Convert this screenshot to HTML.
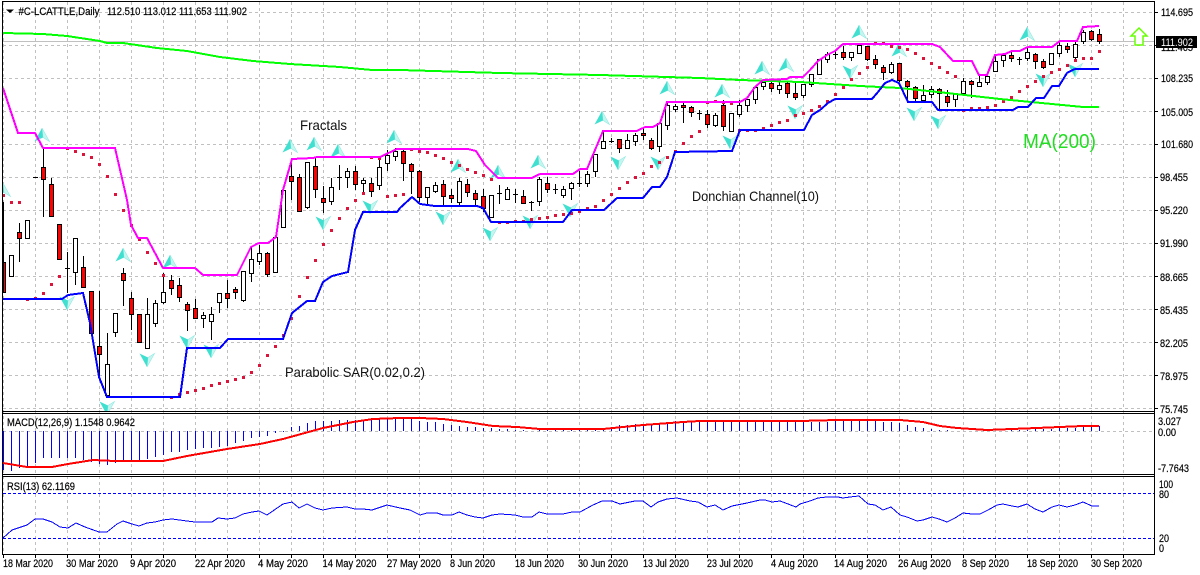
<!DOCTYPE html>
<html><head><meta charset="utf-8"><title>#C-LCATTLE,Daily</title>
<style>html,body{margin:0;padding:0;background:#fff}svg{display:block}text{font-family:"Liberation Sans",Arial,sans-serif;fill:#000}.s text{stroke:#000;stroke-width:.2}</style></head>
<body>
<svg xmlns="http://www.w3.org/2000/svg" width="1200" height="575" viewBox="0 0 1200 575">
<defs>
<g id="u"><path d="M0-7L7.5 6.5L1 2.5Z" fill="#c6f5f0" stroke="#8eeae0" stroke-width=".6"/><path d="M0-7L-7.5 6.5L1 2.5Z" fill="#40e0d0"/></g>
<g id="d"><path d="M0 7L7.5-6.5L1-2.5Z" fill="#c6f5f0" stroke="#8eeae0" stroke-width=".6"/><path d="M0 7L-7.5-6.5L1-2.5Z" fill="#40e0d0"/></g>
<clipPath id="c"><rect x="3" y="2" width="1151" height="409"/></clipPath>
</defs>
<!-- grid -->
<g shape-rendering="crispEdges" fill="none" stroke="#c0c0c0" stroke-dasharray="3 3">
<path d="M3.5 2V554M35.5 2V554M67.5 2V554M99.5 2V554M131.5 2V554M163.5 2V554M195.5 2V554M227.5 2V554M259.5 2V554M291.5 2V554M323.5 2V554M355.5 2V554M387.5 2V554M419.5 2V554M451.5 2V554M483.5 2V554M515.5 2V554M547.5 2V554M579.5 2V554M611.5 2V554M643.5 2V554M675.5 2V554M707.5 2V554M739.5 2V554M771.5 2V554M803.5 2V554M835.5 2V554M867.5 2V554M899.5 2V554M931.5 2V554M963.5 2V554M995.5 2V554M1027.5 2V554M1059.5 2V554M1091.5 2V554M1123.5 2V554"/>
<path d="M3 12.5H1154M3 45.5H1154M3 78.5H1154M3 111.5H1154M3 144.5H1154M3 177.5H1154M3 210.5H1154M3 243.5H1154M3 276.5H1154M3 309.5H1154M3 342.5H1154M3 375.5H1154M3 408.5H1154M3 431.5H1154"/>
</g>
<path d="M3 41.5H1155" stroke="#c0c0c0" fill="none" shape-rendering="crispEdges"/>
<!-- fractals -->
<g clip-path="url(#c)">
<use href="#u" x="3" y="190"/><use href="#u" x="42" y="135"/><use href="#u" x="290" y="146"/><use href="#u" x="314" y="144"/><use href="#u" x="338" y="151"/><use href="#u" x="394" y="137"/><use href="#u" x="123" y="255"/><use href="#u" x="170" y="262"/><use href="#u" x="458" y="166"/><use href="#u" x="498" y="172"/><use href="#u" x="538" y="162"/><use href="#u" x="602" y="118"/><use href="#u" x="667" y="88"/><use href="#u" x="722" y="91"/><use href="#u" x="762" y="68"/><use href="#u" x="786" y="65"/><use href="#u" x="859" y="32"/><use href="#u" x="899" y="50"/><use href="#u" x="1027" y="34"/>
<use href="#d" x="67" y="303"/><use href="#d" x="107" y="408"/><use href="#d" x="147" y="360"/><use href="#d" x="187" y="342"/><use href="#d" x="211" y="351"/><use href="#d" x="323" y="223"/><use href="#d" x="370" y="207"/><use href="#d" x="443" y="218"/><use href="#d" x="490" y="234"/><use href="#d" x="530" y="222"/><use href="#d" x="570" y="210"/><use href="#d" x="618" y="163"/><use href="#d" x="658" y="163"/><use href="#d" x="730" y="142"/><use href="#d" x="795" y="112"/><use href="#d" x="850" y="72"/><use href="#d" x="914" y="114"/><use href="#d" x="938" y="122"/><use href="#d" x="1043" y="80"/><use href="#d" x="1075" y="70"/>
</g>
<!-- candles -->
<g shape-rendering="crispEdges" stroke="#000" stroke-width="1">
<path fill="none" d="M3.5 202V292M11.5 255V277M19.5 223V262M43.5 148V217M51.5 178V216M67.5 252V293M75.5 238V285M83.5 256V287M99.5 291V377M107.5 333V395M115.5 313V337M123.5 268V306M131.5 292V330M147.5 298V349M155.5 300V327M163.5 273V304M171.5 275V295M179.5 278V302M187.5 302V331M195.5 299V319M203.5 312V328M211.5 307V340M219.5 293V313M227.5 280V308M235.5 287V299M243.5 271V302M251.5 246V282M259.5 245V265M267.5 252V277M291.5 158V200M299.5 174V212M307.5 162V209M315.5 158V198M323.5 186V213M331.5 178V205M339.5 165V190M347.5 168V188M355.5 166V190M363.5 178V193M371.5 178V197M379.5 157V190M387.5 150V171M395.5 148V161M403.5 149V181M411.5 163V194M419.5 170V202M427.5 187V204M435.5 182V193M443.5 180V205M451.5 189V203M459.5 178V205M467.5 179V197M475.5 190V206M483.5 189V212M491.5 195V217M499.5 185V204M507.5 187V200M515.5 189V203M523.5 190V204M531.5 201V211M539.5 177V206M547.5 177V193M555.5 184V194M563.5 186V198M571.5 182V200M579.5 171V187M587.5 171V187M595.5 154V177M603.5 132V148M611.5 138V143M619.5 139V153M627.5 134V149M635.5 133V146M643.5 128V140M651.5 138V150M659.5 123V152M667.5 103V130M675.5 104V112M683.5 103V123M691.5 106V117M699.5 110V120M707.5 110V128M715.5 113V127M723.5 100V131M731.5 113V131M739.5 100V117M747.5 99V112M755.5 87V104M763.5 80V90M771.5 82V92M779.5 82V94M787.5 82V98M795.5 83V100M803.5 84V98M811.5 74V87M819.5 59V74M827.5 52V63M835.5 51V59M843.5 46V60M851.5 52V61M859.5 45V54M867.5 46V61M875.5 55V69M883.5 65V80M891.5 62V74M899.5 63V82M907.5 80V100M915.5 86V102M923.5 85V102M931.5 86V98M939.5 88V109M947.5 90V107M955.5 93V107M963.5 78V95M971.5 80V98M979.5 75V87M987.5 75V85M995.5 55V72M1003.5 55V67M1011.5 52V62M1019.5 57V65M1027.5 47V61M1035.5 53V69M1043.5 59V69M1051.5 53V65M1059.5 42V57M1067.5 43V53M1075.5 42V62M1083.5 30V44M1091.5 30V41M1099.5 29V44"/>
<path fill="none" d="M33 177.5h5M65 268.5h5M337 177.5h5M497 193.5h5M513 194.5h5M529 202.5h5M553 189.5h5M577 183.5h5M609 141.5h5M697 113.5h5M833 54.5h5M1017 59.5h5"/>
<path fill="#fff" d="M9.5 255.5h4V276.5h-4zM25.5 220.5h4V238.5h-4zM73.5 238.5h4V272.5h-4zM105.5 364.5h4V395.5h-4zM113.5 313.5h4V332.5h-4zM145.5 314.5h4V348.5h-4zM153.5 303.5h4V323.5h-4zM161.5 292.5h4V302.5h-4zM201.5 315.5h4V318.5h-4zM209.5 314.5h4V321.5h-4zM217.5 293.5h4V302.5h-4zM241.5 271.5h4V300.5h-4zM249.5 259.5h4V273.5h-4zM257.5 253.5h4V261.5h-4zM273.5 237.5h4V272.5h-4zM281.5 190.5h4V227.5h-4zM305.5 162.5h4V207.5h-4zM329.5 187.5h4V201.5h-4zM345.5 171.5h4V177.5h-4zM361.5 180.5h4V183.5h-4zM377.5 167.5h4V185.5h-4zM385.5 155.5h4V163.5h-4zM393.5 151.5h4V156.5h-4zM425.5 187.5h4V197.5h-4zM433.5 185.5h4V191.5h-4zM457.5 181.5h4V202.5h-4zM489.5 195.5h4V217.5h-4zM505.5 189.5h4V199.5h-4zM537.5 179.5h4V201.5h-4zM561.5 189.5h4V195.5h-4zM569.5 183.5h4V188.5h-4zM585.5 174.5h4V183.5h-4zM593.5 154.5h4V171.5h-4zM601.5 141.5h4V148.5h-4zM625.5 140.5h4V148.5h-4zM633.5 135.5h4V141.5h-4zM657.5 123.5h4V146.5h-4zM665.5 105.5h4V125.5h-4zM673.5 106.5h4V109.5h-4zM713.5 115.5h4V125.5h-4zM729.5 113.5h4V131.5h-4zM737.5 105.5h4V114.5h-4zM745.5 99.5h4V105.5h-4zM753.5 87.5h4V99.5h-4zM761.5 82.5h4V86.5h-4zM777.5 85.5h4V89.5h-4zM801.5 84.5h4V95.5h-4zM809.5 74.5h4V84.5h-4zM817.5 59.5h4V74.5h-4zM825.5 54.5h4V59.5h-4zM849.5 52.5h4V57.5h-4zM857.5 45.5h4V53.5h-4zM889.5 64.5h4V72.5h-4zM921.5 95.5h4V100.5h-4zM929.5 89.5h4V94.5h-4zM953.5 94.5h4V99.5h-4zM961.5 81.5h4V93.5h-4zM977.5 82.5h4V86.5h-4zM985.5 76.5h4V82.5h-4zM993.5 61.5h4V71.5h-4zM1001.5 55.5h4V60.5h-4zM1025.5 52.5h4V58.5h-4zM1049.5 53.5h4V64.5h-4zM1057.5 45.5h4V53.5h-4zM1073.5 44.5h4V57.5h-4zM1081.5 32.5h4V41.5h-4z"/>
<path fill="#f00" d="M3.5 262.5h2V292.5h-2zM17.5 232.5h4V238.5h-4zM41.5 167.5h4V179.5h-4zM49.5 184.5h4V216.5h-4zM57.5 224.5h4V259.5h-4zM81.5 267.5h4V287.5h-4zM89.5 291.5h4V333.5h-4zM97.5 346.5h4V354.5h-4zM121.5 273.5h4V280.5h-4zM129.5 298.5h4V314.5h-4zM137.5 314.5h4V342.5h-4zM169.5 280.5h4V288.5h-4zM177.5 285.5h4V297.5h-4zM185.5 304.5h4V310.5h-4zM193.5 308.5h4V318.5h-4zM225.5 293.5h4V298.5h-4zM233.5 289.5h4V292.5h-4zM265.5 253.5h4V274.5h-4zM289.5 176.5h4V181.5h-4zM297.5 177.5h4V211.5h-4zM313.5 166.5h4V189.5h-4zM321.5 198.5h4V202.5h-4zM353.5 171.5h4V184.5h-4zM369.5 183.5h4V191.5h-4zM401.5 151.5h4V163.5h-4zM409.5 164.5h4V171.5h-4zM417.5 171.5h4V197.5h-4zM441.5 184.5h4V196.5h-4zM449.5 195.5h4V198.5h-4zM465.5 184.5h4V192.5h-4zM473.5 193.5h4V199.5h-4zM481.5 196.5h4V208.5h-4zM521.5 196.5h4V203.5h-4zM545.5 183.5h4V189.5h-4zM617.5 139.5h4V148.5h-4zM641.5 133.5h4V135.5h-4zM649.5 140.5h4V148.5h-4zM681.5 105.5h4V107.5h-4zM689.5 107.5h4V112.5h-4zM705.5 114.5h4V124.5h-4zM721.5 105.5h4V126.5h-4zM769.5 83.5h4V88.5h-4zM785.5 83.5h4V93.5h-4zM793.5 93.5h4V97.5h-4zM841.5 52.5h4V57.5h-4zM865.5 46.5h4V59.5h-4zM873.5 59.5h4V64.5h-4zM881.5 67.5h4V72.5h-4zM897.5 63.5h4V80.5h-4zM905.5 81.5h4V86.5h-4zM913.5 87.5h4V98.5h-4zM937.5 89.5h4V93.5h-4zM945.5 96.5h4V102.5h-4zM969.5 81.5h4V84.5h-4zM1009.5 55.5h4V58.5h-4zM1033.5 54.5h4V61.5h-4zM1041.5 61.5h4V67.5h-4zM1065.5 46.5h4V49.5h-4zM1089.5 31.5h4V39.5h-4zM1097.5 34.5h4V41.5h-4z"/>
</g>
<!-- parabolic SAR -->
<path shape-rendering="crispEdges" fill="none" stroke="#dc143c" stroke-width="3" d="M3 195.5h2M10 202.5h3M18 202.5h3M26 299.5h3M34 298.5h3M42 293.5h3M50 284.5h3M58 276.5h3M66 148.5h3M74 151.5h3M82 154.5h3M90 157.5h3M98 164.5h3M106 176.5h3M114 194.5h3M122 210.5h3M130 225.5h3M138 239.5h3M146 252.5h3M154 263.5h3M162 275.5h3M170 397.5h3M178 394.5h3M186 392.5h3M194 390.5h3M202 388.5h3M210 385.5h3M218 383.5h3M226 381.5h3M234 379.5h3M242 377.5h3M250 372.5h3M258 365.5h3M266 355.5h3M274 346.5h3M282 335.5h3M290 318.5h3M298 296.5h3M306 277.5h3M314 260.5h3M322 244.5h3M330 230.5h3M338 218.5h3M346 208.5h3M354 200.5h3M362 193.5h3M370 157.5h3M378 158.5h3M386 196.5h3M394 195.5h3M402 194.5h3M410 149.5h3M418 151.5h3M426 152.5h3M434 155.5h3M442 158.5h3M450 162.5h3M458 165.5h3M466 169.5h3M474 172.5h3M482 175.5h3M490 179.5h3M498 222.5h3M506 222.5h3M514 221.5h3M522 221.5h3M530 219.5h3M538 218.5h3M546 217.5h3M554 215.5h3M562 214.5h3M570 213.5h3M578 211.5h3M586 208.5h3M594 206.5h3M602 200.5h3M610 194.5h3M618 188.5h3M626 182.5h3M634 177.5h3M642 173.5h3M650 166.5h3M658 162.5h3M666 157.5h3M674 151.5h3M682 143.5h3M690 136.5h3M698 131.5h3M706 102.5h3M714 101.5h3M722 102.5h3M730 103.5h3M738 130.5h3M746 130.5h3M754 130.5h3M762 128.5h3M770 125.5h3M778 122.5h3M786 120.5h3M794 115.5h3M802 113.5h3M810 110.5h3M818 106.5h3M826 101.5h3M834 94.5h3M842 87.5h3M850 79.5h3M858 73.5h3M866 67.5h3M874 43.5h3M882 43.5h3M890 46.5h3M898 47.5h3M906 49.5h3M914 53.5h3M922 58.5h3M930 63.5h3M938 67.5h3M946 72.5h3M954 76.5h3M962 110.5h3M970 108.5h3M978 108.5h3M986 107.5h3M994 105.5h3M1002 101.5h3M1010 97.5h3M1018 91.5h3M1026 86.5h3M1034 81.5h3M1042 76.5h3M1050 72.5h3M1058 69.5h3M1066 65.5h3M1074 60.5h3M1082 58.5h3M1090 58.5h3M1098 51.5h3"/>
<!-- MA200 -->
<polyline shape-rendering="crispEdges" fill="none" stroke="#00ff00" stroke-width="2" points="3,33 43,34 67,36 100,41 107,43 123,43 157,48 187,51 220,57 253,61 290,64 340,67 372,70 400,70 500,73 600,75 700,78 740,80 800,82 860,86 900,88 947,93 1000,99 1083,107 1099,107"/>
<!-- Donchian upper -->
<polyline shape-rendering="crispEdges" fill="none" stroke="#ff00ff" stroke-width="2" points="3,88 18,133 35,133 43,148 115,148 127,200 131,225 138,238 147,238 163,268 195,268 203,275 237,275 251,247 259,243 268,243 276,237 283,190 292,159 313,158 317,157 380,157 397,149 468,149 476,151 485,165 498,178 532,178 540,174 573,174 580,169 587,169 603,131 637,131 645,127 653,127 660,123 667,102 740,102 747,98 755,87 763,80 787,79 790,77 803,77 810,70 818,61 827,55 835,51 843,44 932,44 940,47 953,61 972,61 979,75 987,75 995,55 1005,54 1012,51 1020,51 1028,47 1052,47 1060,41 1077,41 1083,27 1099,26"/>
<!-- Donchian lower -->
<polyline shape-rendering="crispEdges" fill="none" stroke="#0000ff" stroke-width="2" points="3,299 62,299 68,295 83,293 90,323 99,377 107,397 180,397 187,348 220,348 228,339 283,339 292,313 307,301 315,301 323,282 332,276 348,272 355,230 363,212 397,212 400,208 412,197 420,204 435,206 477,206 483,208 491,222 563,222 572,210 604,210 617,198 643,198 652,187 660,187 667,177 675,152 732,151 740,130 804,130 812,115 820,110 828,103 835,99 872,99 878,92 885,83 892,80 899,83 908,102 932,102 938,110 1013,110 1018,107 1028,107 1036,98 1044,98 1052,86 1059,86 1067,73 1075,69 1099,69"/>
<!-- MACD histogram -->
<path shape-rendering="crispEdges" fill="none" stroke="#0000ff" d="M3.5 431V470M11.5 431V471M19.5 431V468M27.5 431V466M35.5 431V463M43.5 431V458M51.5 431V458M59.5 431V458M67.5 431V458M75.5 431V458M83.5 431V460M91.5 431V462M99.5 431V464M107.5 431V465M115.5 431V463M123.5 431V460M131.5 431V460M139.5 431V460M147.5 431V459M155.5 431V457M163.5 431V455M171.5 431V452M179.5 431V452M187.5 431V450M195.5 431V449M203.5 431V448M211.5 431V448M219.5 431V447M227.5 431V446M235.5 431V443M243.5 431V441M251.5 431V438M259.5 431V437M267.5 431V436M275.5 431V433M283.5 431V432M291.5 431V427M299.5 431V426M307.5 431V423M315.5 431V421M323.5 431V421M331.5 431V421M339.5 431V420M347.5 431V420M355.5 431V420M363.5 431V420M371.5 431V419M379.5 431V418M387.5 431V418M395.5 431V418M403.5 431V418M411.5 431V418M419.5 431V421M427.5 431V422M435.5 431V422M443.5 431V424M451.5 431V425M459.5 431V426M467.5 431V427M475.5 431V427M483.5 431V428M491.5 431V428M499.5 431V429M507.5 431V429M515.5 431V430M523.5 431V430M531.5 431V431M539.5 431V430M547.5 431V430M555.5 431V430M563.5 431V430M571.5 431V430M579.5 431V430M587.5 431V430M595.5 431V429M603.5 431V428M611.5 431V427M619.5 431V425M627.5 431V425M635.5 431V424M643.5 431V424M651.5 431V424M659.5 431V423M667.5 431V422M675.5 431V421M683.5 431V422M691.5 431V422M699.5 431V422M707.5 431V422M715.5 431V422M723.5 431V422M731.5 431V422M739.5 431V422M747.5 431V422M755.5 431V422M763.5 431V422M771.5 431V422M779.5 431V422M787.5 431V422M795.5 431V422M803.5 431V422M811.5 431V422M819.5 431V422M827.5 431V422M835.5 431V421M843.5 431V421M851.5 431V421M859.5 431V421M867.5 431V421M875.5 431V421M883.5 431V422M891.5 431V422M899.5 431V423M907.5 431V425M915.5 431V427M923.5 431V428M931.5 431V429M939.5 431V430M947.5 431V430M955.5 431V431M963.5 431V431M1003.5 431V431M1011.5 431V430M1019.5 431V430M1027.5 431V430M1035.5 431V429M1043.5 431V429M1051.5 431V429M1059.5 431V428M1067.5 431V428M1075.5 431V428M1083.5 431V427M1091.5 431V426M1099.5 431V426"/>
<!-- MACD signal -->
<polyline shape-rendering="crispEdges" fill="none" stroke="#ff0000" stroke-width="2" points="3,463 27,467 52,467 68,464 93,460 115,461 163,461 187,456 227,449 260,444 283,439 323,428 353,422 373,419 400,418 420,418 443,419 467,422 493,426 517,427 540,429 603,429 643,425 683,422 700,421 800,421 837,420 900,420 923,422 940,426 957,428 987,430 1012,429 1037,428 1060,427 1083,426 1099,426"/>
<!-- RSI -->
<path shape-rendering="crispEdges" fill="none" stroke="#0000ff" stroke-dasharray="3 2" d="M3 493.5H1154M3 538.5H1154"/>
<polyline shape-rendering="crispEdges" fill="none" stroke="#0000ff" points="3,538 12,530 18,528 27,525 35,519 43,519 52,522 60,527 68,528 76,523 85,527 99,532 107,532 117,524 123,521 132,524 139,526 147,523 155,522 163,520 172,519 187,521 195,522 212,522 218,518 227,519 235,518 243,514 252,512 259,511 267,515 283,504 292,502 299,508 307,504 315,508 323,510 332,508 347,507 355,509 363,509 372,510 387,505 400,508 410,510 420,515 427,513 437,513 443,515 452,515 459,512 467,515 475,517 483,518 492,515 500,514 515,515 523,517 532,517 539,512 547,514 563,514 572,512 580,512 593,505 602,501 612,501 620,504 635,501 643,501 651,507 658,502 667,499 677,498 690,501 698,502 707,507 715,505 723,510 732,506 747,503 760,500 765,500 772,502 780,501 788,504 796,507 800,504 810,501 818,498 827,497 838,497 843,498 850,497 859,496 868,504 875,505 883,510 891,507 900,515 907,517 917,521 923,520 932,517 939,519 947,522 955,518 963,513 972,514 980,514 988,510 997,505 1003,504 1012,506 1018,507 1027,504 1035,509 1043,512 1052,507 1059,505 1067,507 1075,505 1083,502 1092,506 1099,506"/>
<!-- frame -->
<path shape-rendering="crispEdges" fill="none" stroke="#000" d="M2.5 1V555M1154.5 1V555M2 1.5H1155M2 411.5H1155M2 413.5H1155M2 474.5H1155M2 476.5H1155M2 554.5H1155"/>
<path shape-rendering="crispEdges" fill="none" stroke="#000" d="M1155 12.5h3M1155 45.5h3M1155 78.5h3M1155 111.5h3M1155 144.5h3M1155 177.5h3M1155 210.5h3M1155 243.5h3M1155 276.5h3M1155 309.5h3M1155 342.5h3M1155 375.5h3M1155 408.5h3M3.5 555v3M35.5 555v3M67.5 555v3M99.5 555v3M131.5 555v3M163.5 555v3M195.5 555v3M227.5 555v3M259.5 555v3M291.5 555v3M323.5 555v3M355.5 555v3M387.5 555v3M419.5 555v3M451.5 555v3M483.5 555v3M515.5 555v3M547.5 555v3M579.5 555v3M611.5 555v3M643.5 555v3M675.5 555v3M707.5 555v3M739.5 555v3M771.5 555v3M803.5 555v3M835.5 555v3M867.5 555v3M899.5 555v3M931.5 555v3M963.5 555v3M995.5 555v3M1027.5 555v3M1059.5 555v3M1091.5 555v3M1123.5 555v3"/>
<!-- header -->
<path d="M6 9.5h8l-4 3.5z" fill="#000"/>
<g font-size="11" class="s">
<text x="18.5" y="15" textLength="81" lengthAdjust="spacingAndGlyphs">#C-LCATTLE,Daily</text>
<text x="107" y="15" textLength="140" lengthAdjust="spacingAndGlyphs">112.510 113.012 111.653 111.902</text>
<text x="7" y="426" textLength="128" lengthAdjust="spacingAndGlyphs">MACD(12,26,9) 1.1548 0.9642</text>
<text x="7" y="490" textLength="68" lengthAdjust="spacingAndGlyphs">RSI(13) 62.1169</text>
<!-- price axis -->
<text x="1161" y="16" textLength="32" lengthAdjust="spacingAndGlyphs">114.695</text>
<text x="1161" y="51" textLength="32" lengthAdjust="spacingAndGlyphs">111.465</text>
<text x="1161" y="82" textLength="32" lengthAdjust="spacingAndGlyphs">108.235</text>
<text x="1161" y="116" textLength="32" lengthAdjust="spacingAndGlyphs">105.005</text>
<text x="1161" y="148" textLength="32" lengthAdjust="spacingAndGlyphs">101.680</text>
<text x="1160" y="181" textLength="28" lengthAdjust="spacingAndGlyphs">98.455</text>
<text x="1160" y="214" textLength="28" lengthAdjust="spacingAndGlyphs">95.220</text>
<text x="1160" y="247" textLength="28" lengthAdjust="spacingAndGlyphs">91.990</text>
<text x="1160" y="281" textLength="28" lengthAdjust="spacingAndGlyphs">88.665</text>
<text x="1160" y="314" textLength="28" lengthAdjust="spacingAndGlyphs">85.435</text>
<text x="1160" y="347" textLength="28" lengthAdjust="spacingAndGlyphs">82.205</text>
<text x="1160" y="380" textLength="28" lengthAdjust="spacingAndGlyphs">78.975</text>
<text x="1160" y="413" textLength="28" lengthAdjust="spacingAndGlyphs">75.745</text>
<!-- pane axes -->
<text x="1158" y="425" textLength="23" lengthAdjust="spacingAndGlyphs">3.027</text>
<text x="1158" y="436" textLength="18" lengthAdjust="spacingAndGlyphs">0.00</text>
<text x="1158" y="472" textLength="31" lengthAdjust="spacingAndGlyphs">-7.7643</text>
<text x="1159" y="488" textLength="14" lengthAdjust="spacingAndGlyphs">100</text>
<text x="1159" y="498" textLength="10" lengthAdjust="spacingAndGlyphs">80</text>
<text x="1159" y="542" textLength="10" lengthAdjust="spacingAndGlyphs">20</text>
<text x="1159" y="552" textLength="5" lengthAdjust="spacingAndGlyphs">0</text>
<!-- dates -->
<text x="3" y="567" textLength="50" lengthAdjust="spacingAndGlyphs">18 Mar 2020</text>
<text x="66" y="567" textLength="52" lengthAdjust="spacingAndGlyphs">30 Mar 2020</text>
<text x="130" y="567" textLength="46" lengthAdjust="spacingAndGlyphs">9 Apr 2020</text>
<text x="195" y="567" textLength="50" lengthAdjust="spacingAndGlyphs">22 Apr 2020</text>
<text x="258" y="567" textLength="50" lengthAdjust="spacingAndGlyphs">4 May 2020</text>
<text x="322.5" y="567" textLength="54" lengthAdjust="spacingAndGlyphs">14 May 2020</text>
<text x="387" y="567" textLength="54" lengthAdjust="spacingAndGlyphs">27 May 2020</text>
<text x="450" y="567" textLength="45" lengthAdjust="spacingAndGlyphs">8 Jun 2020</text>
<text x="515" y="567" textLength="49" lengthAdjust="spacingAndGlyphs">18 Jun 2020</text>
<text x="578" y="567" textLength="50" lengthAdjust="spacingAndGlyphs">30 Jun 2020</text>
<text x="643" y="567" textLength="46" lengthAdjust="spacingAndGlyphs">13 Jul 2020</text>
<text x="707" y="567" textLength="46" lengthAdjust="spacingAndGlyphs">23 Jul 2020</text>
<text x="771" y="567" textLength="47" lengthAdjust="spacingAndGlyphs">4 Aug 2020</text>
<text x="834" y="567" textLength="53" lengthAdjust="spacingAndGlyphs">14 Aug 2020</text>
<text x="898" y="567" textLength="53" lengthAdjust="spacingAndGlyphs">26 Aug 2020</text>
<text x="962" y="567" textLength="47" lengthAdjust="spacingAndGlyphs">8 Sep 2020</text>
<text x="1027" y="567" textLength="51" lengthAdjust="spacingAndGlyphs">18 Sep 2020</text>
<text x="1091" y="567" textLength="51" lengthAdjust="spacingAndGlyphs">30 Sep 2020</text>
</g>
<!-- price label -->
<rect x="1156" y="36" width="41" height="12" fill="#000"/>
<text x="1161" y="46" font-size="11" textLength="32" lengthAdjust="spacingAndGlyphs" style="fill:#fff">111.902</text>
<!-- arrow -->
<path d="M1139 28L1147 36H1143V45H1135V36H1131Z" fill="#fff" stroke="#66ff00" stroke-width="1.5"/>
<!-- annotations -->
<g font-size="14">
<text x="300" y="130" textLength="47" lengthAdjust="spacingAndGlyphs" style="fill:#111">Fractals</text>
<text x="285" y="377" textLength="140" lengthAdjust="spacingAndGlyphs" style="fill:#111">Parabolic SAR(0.02,0.2)</text>
<text x="692" y="201" textLength="127" lengthAdjust="spacingAndGlyphs" style="fill:#111">Donchian Channel(10)</text>
</g>
<text x="1023" y="148" font-size="20" textLength="73" lengthAdjust="spacingAndGlyphs" style="fill:#22dd22">MA(200)</text>
</svg>
</body></html>
